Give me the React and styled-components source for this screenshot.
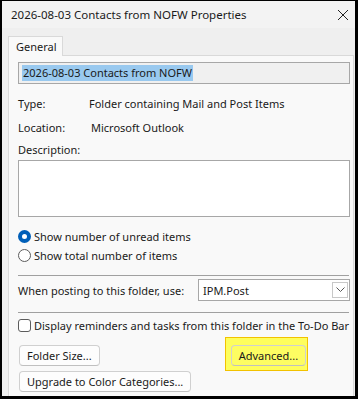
import React from 'react'
import styled, { createGlobalStyle } from 'styled-components'

const GlobalStyle = createGlobalStyle`
  html, body {
    margin: 0;
    background: #000;
  }
  body {
    font-family: "Noto Sans", "Open Sans", sans-serif;
    font-size: 11px;
    line-height: 15px;
    color: #1a1a1a;
    white-space: nowrap;
  }
`

const Window = styled.div`
  width: 353px;
  height: 395px;
  margin: 1px 0 0 2px;
  background: #efefef;
  display: flex;
  flex-direction: column;
  overflow: hidden;
`

const TitleBar = styled.div`
  height: 27px;
  flex: none;
  background: #f3f3f3;
  display: flex;
  align-items: center;
  justify-content: space-between;
  padding: 0 6px 0 9px;
  font-size: 11.5px;
`

const Close = styled.svg`
  width: 12px;
  height: 12px;
`

const Body = styled.div`
  flex: 1;
  display: flex;
  flex-direction: column;
  padding: 8px 0 0 6px;
`

const TabStrip = styled.div`
  display: flex;
  position: relative;
  z-index: 1;
`

const Tab = styled.div`
  width: 55px;
  height: 20px;
  box-sizing: border-box;
  border: 1px solid #d9d9d9;
  border-bottom: none;
  background: #f9f9f9;
  padding: 2px 0 0 7px;
  margin-bottom: -1px;
`

const Panel = styled.div`
  flex: 1;
  width: 346px;
  box-sizing: border-box;
  border: 1px solid #d9d9d9;
  border-bottom: none;
  background: #f9f9f9;
  padding: 6px 0 0 9px;
  display: flex;
  flex-direction: column;
`

const NameBox = styled.div`
  width: 332px;
  height: 22px;
  box-sizing: border-box;
  border: 1px solid #a7a7a7;
  background: #f0f0f0;
  display: flex;
  align-items: center;
  padding-left: 3px;
`

const Selected = styled.span`
  background: #99c9ef;
  padding: 0 1px;
  line-height: 16px;
`

const InfoRow = styled.div`
  display: flex;
  align-items: center;
  height: ${p => p.$h || 24}px;
  margin-top: ${p => p.$top || 0}px;
`

const Label = styled.span`
  width: ${p => p.$w}px;
  flex: none;
`

const Field = styled.div`
  width: 332px;
  height: 57px;
  box-sizing: border-box;
  border: 1px solid #a7a7a7;
  background: #fff;
`

const OptionRow = styled.label`
  display: flex;
  align-items: center;
  gap: 3px;
  height: 19px;
  margin-top: ${p => p.$top || 0}px;
`

const Radio = styled.span`
  width: 13px;
  height: 13px;
  box-sizing: border-box;
  border-radius: 50%;
  flex: none;
  border: ${p => (p.$on ? '4px solid #005fb8' : '1px solid #5c5c5c')};
  background: #fff;
`

const Check = styled.span`
  width: 13px;
  height: 13px;
  box-sizing: border-box;
  border-radius: 3px;
  flex: none;
  border: 1px solid #5c5c5c;
  background: #fff;
`

const Separator = styled.div`
  width: 331px;
  height: 1px;
  background: #a0a0a0;
  margin-top: ${p => p.$top || 0}px;
`

const PostRow = styled.div`
  display: flex;
  align-items: center;
  justify-content: space-between;
  width: 332px;
  margin-top: 3px;
`

const Combo = styled.div`
  width: 152px;
  height: 22px;
  box-sizing: border-box;
  border: 1px solid #a7a7a7;
  background: #fff;
  display: flex;
  align-items: center;
  justify-content: space-between;
  padding: 0 1px 0 4px;
`

const DropButton = styled.span`
  width: 16px;
  height: 16px;
  box-sizing: border-box;
  border: 1px solid #c8c8c8;
  display: flex;
  align-items: center;
  justify-content: center;
`

const ButtonRow = styled.div`
  display: flex;
  align-items: center;
  margin-top: ${p => p.$top || 0}px;
`

const Button = styled.button`
  font: inherit;
  color: #1a1a1a;
  height: 21px;
  box-sizing: border-box;
  padding: 0 7px;
  border: 1px solid #d0d0d0;
  border-bottom-color: #c0c0c0;
  border-radius: 4px;
  background: ${p => (p.$hl ? '#fdfd62' : '#fdfdfd')};
  margin-left: 1px;
`

const Highlight = styled.div`
  margin: -8px 0 -5px 125px;
  padding: 7px 1px 4px 4px;
  background: #fefe5c;
  border: 1px solid #f2c200;
  display: flex;
`

export default function App() {
  return (
    <>
      <GlobalStyle />
      <Window>
        <TitleBar>
          <span>2026-08-03 Contacts from NOFW Properties</span>
          <Close viewBox="0 0 12 12">
            <path d="M1 1 L11 11 M11 1 L1 11" stroke="#222" strokeWidth="1" fill="none" />
          </Close>
        </TitleBar>
        <Body>
          <TabStrip>
            <Tab>General</Tab>
          </TabStrip>
          <Panel>
            <NameBox>
              <Selected>2026-08-03 Contacts from NOFW</Selected>
            </NameBox>
            <InfoRow $top={7}>
              <Label $w={71}>Type:</Label>
              <span>Folder containing Mail and Post Items</span>
            </InfoRow>
            <InfoRow>
              <Label $w={73}>Location:</Label>
              <span>Microsoft Outlook</span>
            </InfoRow>
            <InfoRow $h={21}>
              <Label $w={100}>Description:</Label>
            </InfoRow>
            <Field />
            <OptionRow $top={10}>
              <Radio $on />
              Show number of unread items
            </OptionRow>
            <OptionRow>
              <Radio />
              Show total number of items
            </OptionRow>
            <Separator $top={10} />
            <PostRow>
              <span>When posting to this folder, use:</span>
              <Combo>
                <span>IPM.Post</span>
                <DropButton>
                  <svg width="9" height="6" viewBox="0 0 9 6">
                    <path d="M0.5 0.5 L4.5 4.5 L8.5 0.5" stroke="#555" fill="none" />
                  </svg>
                </DropButton>
              </Combo>
            </PostRow>
            <Separator $top={11} />
            <OptionRow $top={3}>
              <Check />
              Display reminders and tasks from this folder in the To-Do Bar
            </OptionRow>
            <ButtonRow $top={10}>
              <Button>Folder Size...</Button>
              <Highlight>
                <Button $hl>Advanced...</Button>
              </Highlight>
            </ButtonRow>
            <ButtonRow $top={5}>
              <Button>Upgrade to Color Categories...</Button>
            </ButtonRow>
          </Panel>
        </Body>
      </Window>
    </>
  )
}
